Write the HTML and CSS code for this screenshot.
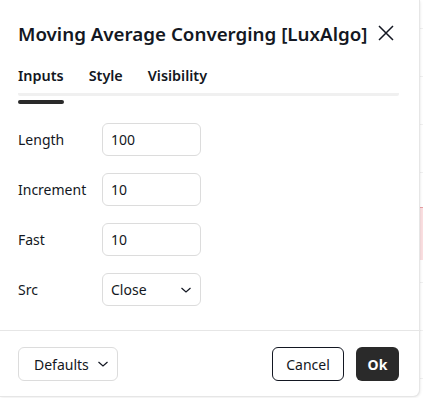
FILE: index.html
```html
<!DOCTYPE html>
<html lang="en">
<head>
    <meta charset="UTF-8">
    <meta name="viewport" content="width=device-width, initial-scale=1.0">
    <title>Moving Average Converging [LuxAlgo]</title>
    <link rel="stylesheet" href="styles.css">
</head>
<body>
    <div class="chart">
        <div class="grid-line"></div>
        <div class="grid-line"></div>
        <div class="grid-line"></div>
        <div class="grid-line"></div>
        <div class="zone"></div>
        <div class="grid-line"></div>
        <div class="grid-line"></div>
        <div class="grid-line"></div>
    </div>

    <div class="dialog">
        <div class="dialog-head">
            <h1>Moving Average Converging [LuxAlgo]</h1>
            <button class="close" aria-label="Close">
                <svg width="18" height="18" viewBox="0 0 18 18"><path d="M2 2l14 14M16 2L2 16" stroke="#131722" stroke-width="1.5" fill="none"/></svg>
            </button>
        </div>

        <div class="tabs">
            <span class="tab active">Inputs</span>
            <span class="tab">Style</span>
            <span class="tab">Visibility</span>
        </div>

        <div class="inputs">
            <div class="row">
                <label>Length</label>
                <div class="field">100</div>
            </div>
            <div class="row">
                <label>Increment</label>
                <div class="field">10</div>
            </div>
            <div class="row">
                <label>Fast</label>
                <div class="field">10</div>
            </div>
            <div class="row">
                <label>Src</label>
                <div class="field select">Close
                    <svg width="12" height="8" viewBox="0 0 12 8"><path d="M1.5 2l4.5 4 4.5-4" stroke="#131722" stroke-width="1.2" fill="none"/></svg>
                </div>
            </div>
        </div>

        <div class="footer">
            <button class="btn defaults">Defaults
                <svg width="12" height="8" viewBox="0 0 12 8"><path d="M1.5 2l4.5 4 4.5-4" stroke="#131722" stroke-width="1.2" fill="none"/></svg>
            </button>
            <div class="actions">
                <button class="btn cancel">Cancel</button>
                <button class="btn ok">Ok</button>
            </div>
        </div>
    </div>
</body>
</html>
```

FILE: styles.css
```css
body {
    margin: 0;
    width: 423px;
    height: 398px;
    overflow: hidden;
    background: #fff;
    font-family: "Noto Sans", "DejaVu Sans", sans-serif;
    color: #131722;
    position: relative;
}

/* chart behind the dialog */
.chart {
    position: absolute;
    top: 0;
    right: 0;
    width: 6px;
    height: 398px;
}
.grid-line { height: 1px; background: #f0f0f0; margin-top: 47px; }
.grid-line:first-child { margin-top: 28px; }
.zone {
    height: 52px;
    margin-top: 34px;
    background: #fbdfe1;
    border-top: 1px solid #e8a0a4;
}
.zone + .grid-line { margin-top: 22px; }

.dialog {
    position: absolute;
    top: 0;
    left: 0;
    width: 419px;
    height: 396px;
    background: #fff;
    border-radius: 0 0 6px 0;
    box-shadow: 0 0 0 1px #e6e6e6, 1px 1px 3px rgba(0,0,0,0.12);
    display: flex;
    flex-direction: column;
}

.dialog-head {
    display: flex;
    align-items: center;
    gap: 10px;
    padding: 21px 20px 0 18px;
    height: 24px;
}
.dialog-head h1 {
    margin: 0;
    font-size: 18.75px;
    font-weight: 600;
    white-space: nowrap;
}
.close {
    border: 0;
    background: none;
    padding: 0;
    width: 18px;
    height: 18px;
    display: flex;
}

.tabs {
    margin: 22px 20px 0 18px;
    display: flex;
    gap: 25px;
    border-bottom: 3px solid #f0f0f0;
    border-radius: 2px;
    height: 26px;
}
.tab {
    font-size: 14.4px;
    font-weight: 600;
    line-height: 18px;
    position: relative;
}
.tab.active::after {
    content: "";
    position: absolute;
    left: 0;
    right: 0;
    bottom: -11px;
    height: 4px;
    border-radius: 2px;
    background: #2a2a2a;
}

.inputs {
    padding: 27px 18px 0;
    display: flex;
    flex-direction: column;
    gap: 17px;
    height: 207px;
    border-bottom: 1px solid #e6e6e6;
}
.row {
    display: flex;
    align-items: center;
    height: 33px;
}
.row label {
    width: 84px;
    font-size: 14px;
}
.field {
    width: 99px;
    height: 33px;
    box-sizing: border-box;
    border: 1px solid #dcdcdc;
    border-radius: 6px;
    padding: 0 8px 0 8px;
    display: flex;
    align-items: center;
    justify-content: space-between;
    font-size: 14px;
}

.footer {
    display: flex;
    justify-content: space-between;
    align-items: center;
    padding: 16px 20px 0 18px;
}
.actions { display: flex; gap: 12px; }
.btn {
    height: 34px;
    box-sizing: border-box;
    border-radius: 6px;
    font-family: inherit;
    font-size: 14px;
    color: #131722;
    background: #fff;
    display: flex;
    align-items: center;
}
.defaults {
    width: 100px;
    border: 1px solid #dcdcdc;
    padding: 0 8px 0 15px;
    justify-content: space-between;
}
.cancel {
    width: 72px;
    border: 1px solid #131722;
    justify-content: center;
}
.ok {
    width: 43px;
    border: 0;
    background: #2a2a2a;
    color: #fff;
    font-weight: 700;
    justify-content: center;
}
```
